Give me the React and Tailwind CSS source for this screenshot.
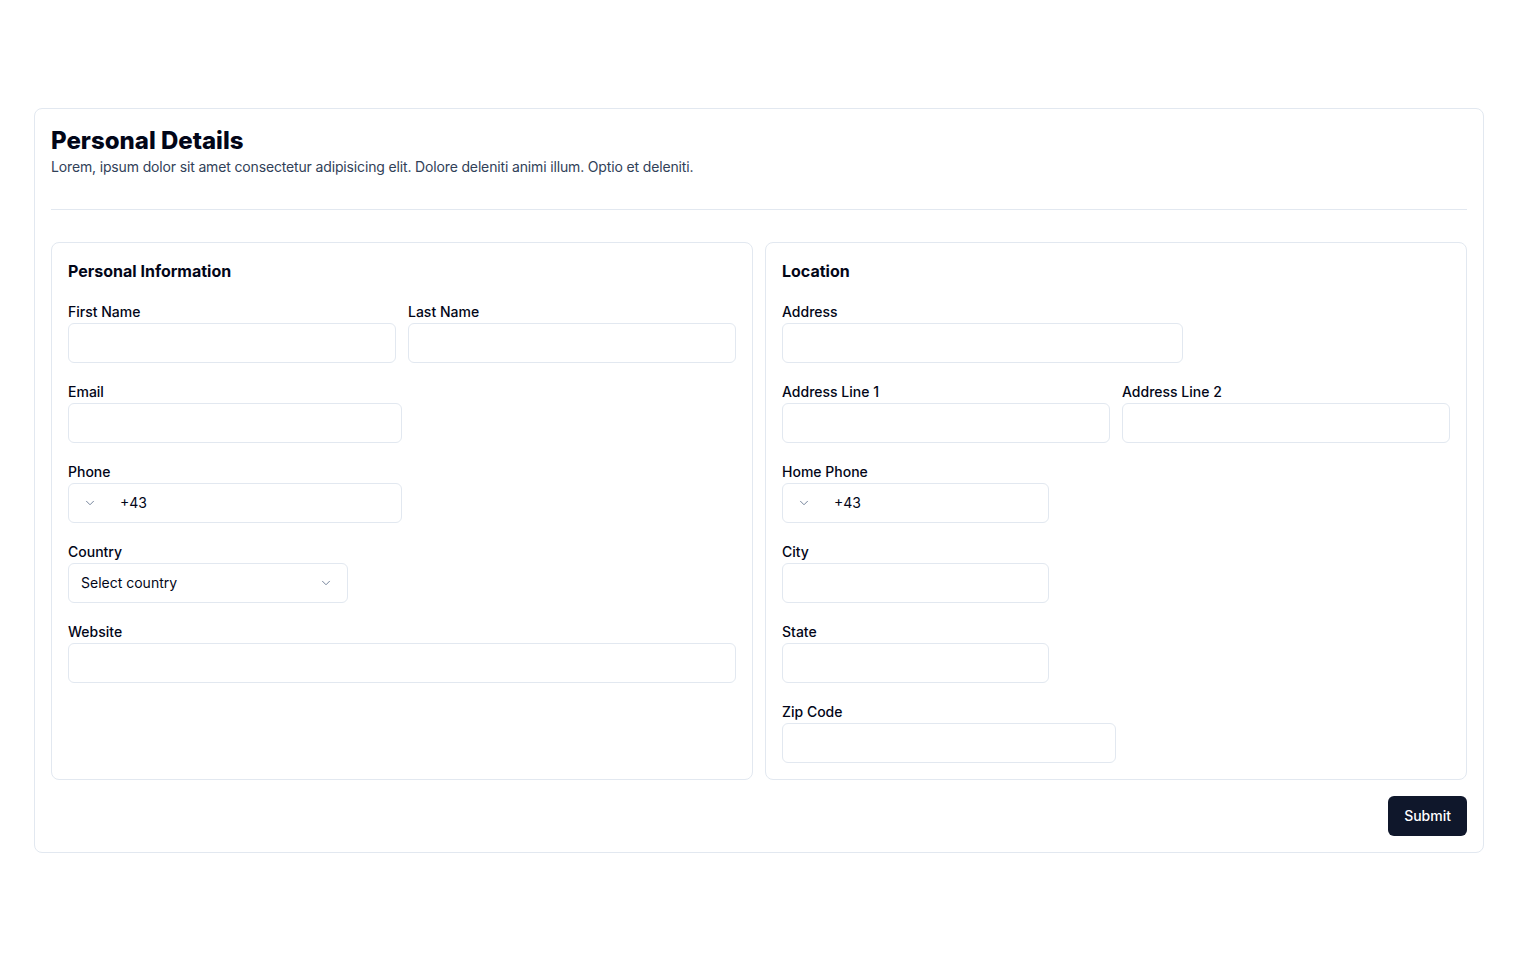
import React from 'react';
import { ChevronDown } from 'lucide-react';

const Field = ({ label, children }) => (
  <div className="flex flex-col items-start">
    <label className="text-sm font-medium leading-5 text-slate-950">{label}</label>
    <div className="mt-px w-full">{children}</div>
  </div>
);

const Input = ({ width = 'w-full' }) => (
  <input
    type="text"
    className={`block h-10 ${width} rounded-md border border-slate-200 bg-white px-3 text-sm outline-none`}
  />
);

const PhoneInput = ({ width }) => (
  <div className={`flex h-10 items-center rounded-md border border-slate-200 bg-white text-sm ${width}`}>
    <ChevronDown size={14} className="ml-[14px] text-slate-500" strokeWidth={1.5} />
    <span className="ml-[23px] text-slate-950">+43</span>
  </div>
);

export default function App() {
  return (
    <div className="min-h-screen bg-white pt-[108px] px-[34px] font-['Inter',sans-serif] text-slate-950">
      <div className="w-[1450px] rounded-lg border border-slate-200 p-4">
        <h1 className="text-2xl font-extrabold leading-8">Personal Details</h1>
        <p className="text-sm leading-5 tracking-[-0.15px] text-slate-700">
          Lorem, ipsum dolor sit amet consectetur adipisicing elit. Dolore deleniti animi illum. Optio et deleniti.
        </p>
        <div className="my-8 h-px bg-slate-200" />

        <div className="grid grid-cols-2 gap-3">
          {/* Personal Information */}
          <div className="rounded-lg border border-slate-200 px-4 pt-4 pb-4">
            <h2 className="text-base font-bold leading-6">Personal Information</h2>
            <div className="mt-[19px] flex flex-col gap-[19px]">
              <div className="grid grid-cols-2 gap-3">
                <Field label="First Name"><Input /></Field>
                <Field label="Last Name"><Input /></Field>
              </div>
              <Field label="Email"><Input width="w-[334px]" /></Field>
              <Field label="Phone"><PhoneInput width="w-[334px]" /></Field>
              <Field label="Country">
                <div className="flex h-10 w-[280px] items-center justify-between rounded-md border border-slate-200 pl-3 pr-[14px] text-sm">
                  <span>Select country</span>
                  <ChevronDown size={14} className="text-slate-500" strokeWidth={1.5} />
                </div>
              </Field>
              <Field label="Website"><Input /></Field>
            </div>
          </div>

          {/* Location */}
          <div className="rounded-lg border border-slate-200 px-4 pt-4 pb-4">
            <h2 className="text-base font-bold leading-6">Location</h2>
            <div className="mt-[19px] flex flex-col gap-[19px]">
              <Field label="Address"><Input width="w-[401px]" /></Field>
              <div className="grid grid-cols-2 gap-3">
                <Field label="Address Line 1"><Input /></Field>
                <Field label="Address Line 2"><Input /></Field>
              </div>
              <Field label="Home Phone"><PhoneInput width="w-[267px]" /></Field>
              <Field label="City"><Input width="w-[267px]" /></Field>
              <Field label="State"><Input width="w-[267px]" /></Field>
              <Field label="Zip Code"><Input width="w-[334px]" /></Field>
            </div>
          </div>
        </div>

        <div className="mt-4 flex justify-end">
          <button className="h-10 rounded-md bg-slate-900 px-4 text-sm font-medium text-white">Submit</button>
        </div>
      </div>
    </div>
  );
}
